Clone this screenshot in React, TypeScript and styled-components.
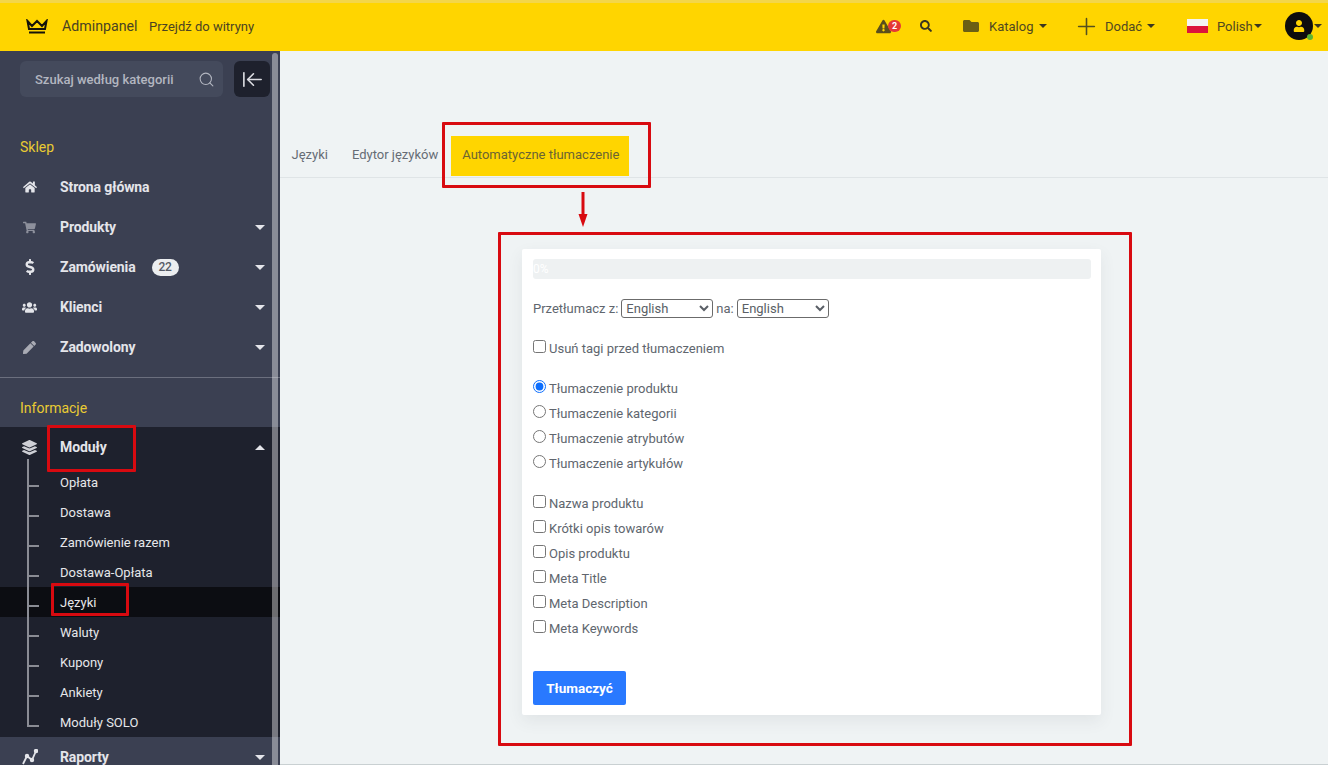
import React from 'react';
import styled, { createGlobalStyle } from 'styled-components';
import { FaHome, FaShoppingCart, FaDollarSign, FaUsers, FaPen, FaLayerGroup, FaFolder, FaSearch, FaUser, FaExclamationTriangle } from 'react-icons/fa';
import { ArrowLeftToLine, Plus, Search } from 'lucide-react';

const Global = createGlobalStyle`
  html, body { margin: 0; padding: 0; height: 100%; overflow: hidden; }
  body { font-family: Roboto, "Liberation Sans", sans-serif; background: #eff3f4; }
  * { box-sizing: border-box; }
`;

const Page = styled.div`
  position: relative;
  width: 1328px;
  height: 765px;
  overflow: hidden;
  display: flex;
  flex-direction: column;
`;
const Header = styled.header`
  flex: none;
  height: 51px;
  background: #ffd500;
  border-top: 3px solid #f3d64a;
  padding-bottom: 2px;
  display: flex;
  align-items: center;
  color: #4a4322;
  font-size: 14px;
`;
const Brand = styled.div`
  display: flex;
  align-items: center;
  padding-left: 26px;
  width: 149px;
  gap: 14px;
  font-size: 14.2px;
`;
const SiteLink = styled.span`
  font-size: 13px;
`;
const HeaderRight = styled.div`
  margin-left: auto;
  display: flex;
  align-items: center;
  height: 100%;
`;
const HeaderItem = styled.div<{ $w: number; $gap?: number }>`
  width: ${p => p.$w}px;
  display: flex;
  align-items: center;
  gap: ${p => p.$gap ?? 10}px;
  font-size: 13px;
  color: #4f4820;
  position: relative;
`;
const Caret = styled.span<{ $up?: boolean; $color?: string; $size?: number; $shift?: number }>`
  display: inline-block;
  width: 0;
  height: 0;
  margin-left: ${p => p.$shift ?? 0}px;
  border-left: ${p => p.$size ?? 4}px solid transparent;
  border-right: ${p => p.$size ?? 4}px solid transparent;
  ${p => `border-${p.$up ? 'bottom' : 'top'}: ${p.$size ?? 4}px solid ${p.$color ?? '#3a3620'};`}
`;
const AlertBadge = styled.span`
  position: absolute;
  left: 12px;
  top: 1px;
  width: 13px;
  height: 12px;
  border-radius: 6px;
  background: #e53935;
  color: #fff;
  font-size: 9px;
  font-weight: 700;
  line-height: 12px;
  text-align: center;
`;
const Avatar = styled.span`
  position: relative;
  width: 28px;
  height: 28px;
  border-radius: 50%;
  background: #0d0d0d;
  color: #ffd500;
  display: flex;
  align-items: center;
  justify-content: center;
`;
const OnlineDot = styled.span`
  position: absolute;
  right: 0;
  bottom: 0;
  width: 6px;
  height: 6px;
  border-radius: 50%;
  background: #5cb531;
`;
const Body = styled.div`
  flex: 1;
  display: flex;
  min-height: 0;
`;
const Sidebar = styled.aside`
  position: relative;
  flex: none;
  width: 280px;
  background: #3b4052;
  overflow: hidden;
`;
const Scrollbar = styled.div`
  position: absolute;
  right: 2px;
  top: 2px;
  bottom: 0;
  width: 6px;
  border-radius: 3px 3px 0 0;
  background: rgba(255, 255, 255, 0.4);
`;
const SearchRow = styled.div`
  display: flex;
  gap: 11px;
  padding: 10px 0 0 20px;
`;
const SearchBox = styled.div`
  width: 203px;
  height: 36px;
  border-radius: 6px;
  background: #444a5c;
  color: #b3b6c0;
  font-size: 13px;
  font-weight: 500;
  display: flex;
  align-items: center;
  justify-content: space-between;
  padding: 0 8px 0 15px;
`;
const CollapseBtn = styled.div`
  width: 36px;
  height: 36px;
  border-radius: 6px;
  background: #1e212d;
  color: #dcdde2;
  display: flex;
  align-items: center;
  justify-content: center;
`;
const SectionTitle = styled.div<{ $top: number; $bottom: number }>`
  color: #e9cb33;
  font-size: 14px;
  line-height: 20px;
  padding-left: 20px;
  margin: ${p => p.$top}px 0 ${p => p.$bottom}px;
`;
const Row = styled.div<{ $open?: boolean }>`
  height: 40px;
  display: flex;
  align-items: center;
  padding: 0 15px 0 0;
  background: ${p => (p.$open ? '#1e212d' : 'transparent')};
  color: #e4e5ea;
  font-size: 14px;
  font-weight: 700;
`;
const RowIcon = styled.span`
  width: 60px;
  display: flex;
  justify-content: center;
  padding-right: 0;
  color: #e4e5ea;
  flex: none;
  & > svg { margin-left: -1px; }
`;
const RowLabel = styled.span`
  flex: 1;
  display: flex;
  align-items: center;
  gap: 16px;
  letter-spacing: -0.1px;
`;
const Count = styled.span`
  width: 27px;
  height: 17px;
  border-radius: 9px;
  background: #eceef0;
  color: #555a66;
  font-size: 12px;
  font-weight: 500;
  line-height: 17px;
  text-align: center;
`;
const Divider = styled.div`
  height: 1px;
  background: #6b6f7e;
  margin-top: 10px;
`;
const SubMenu = styled.div`
  position: relative;
  background: #1e212d;
`;
const SubRow = styled.div<{ $active?: boolean }>`
  position: relative;
  height: 30px;
  display: flex;
  align-items: center;
  padding-left: 60px;
  color: #e6e7ea;
  font-size: 13px;
  background: ${p => (p.$active ? '#0c0d12' : 'transparent')};
  &::before {
    content: '';
    position: absolute;
    left: 28px;
    top: 18px;
    width: 11px;
    height: 2px;
    background: #8a8c94;
  }
`;
const TreeLine = styled.span`
  position: absolute;
  left: 27px;
  top: -8px;
  bottom: 10px;
  width: 2px;
  background: #8a8c94;
  z-index: 1;
`;
const Main = styled.main`
  flex: 1;
  min-width: 0;
  background: #eff3f4;
  border-bottom: 1px solid #c9d0d2;
  padding-top: 85px;
`;
const Tabs = styled.nav`
  height: 42px;
  border-bottom: 1px solid #dfe4e6;
  display: flex;
  align-items: flex-start;
  padding-left: 11.5px;
  font-size: 13px;
  color: #666c75;
`;
const Tab = styled.div<{ $active?: boolean }>`
  height: 40px;
  display: flex;
  align-items: center;
  padding: 0 ${p => (p.$active ? '10px' : '0')} 3px ${p => (p.$active ? '11px' : '0')};
  margin-right: ${p => (p.$active ? 0 : 24)}px;
  ${p => (p.$active ? 'background: #ffd500; color: #6b6433; margin-left: -11px;' : '')}
`;
const Card = styled.section`
  width: 579px;
  height: 466px;
  margin: 71px 0 0 242px;
  background: #fff;
  border-radius: 2px;
  box-shadow: 0 6px 16px rgba(60, 70, 80, 0.08);
  padding: 10px 10px 0 11px;
  color: #60666e;
  font-size: 13px;
`;
const Progress = styled.div`
  height: 20px;
  border-radius: 3px;
  background: #eef1f2;
  color: #fff;
  font-size: 12px;
  line-height: 20px;
`;
const LangRow = styled.div`
  display: flex;
  align-items: center;
  gap: 3px;
  height: 20px;
  margin-top: 19px;
  white-space: nowrap;
`;
const LangSelect = styled.select`
  width: 92px;
  height: 19px;
  font-family: Roboto, "Liberation Sans", sans-serif;
  font-size: 13px;
  color: #5a5f66;
  background: #fff;
  border: 1px solid #6b6b6b;
  border-radius: 3px;
  padding: 0;
`;
const OptionGroup = styled.div<{ $top: number }>`
  margin-top: ${p => p.$top}px;
  display: flex;
  flex-direction: column;
`;
const OptionRow = styled.label`
  height: 25px;
  display: flex;
  align-items: center;
  gap: 3px;
  & > input {
    width: 13px;
    height: 13px;
    margin: -4px 0 0 0;
    flex: none;
    accent-color: #0d6efd;
  }
`;
const TranslateBtn = styled.button`
  display: block;
  margin-top: 30px;
  width: 93px;
  height: 34px;
  border: 0;
  border-radius: 2px;
  background: #2979ff;
  color: #fff;
  font-family: Roboto, "Liberation Sans", sans-serif;
  font-size: 13.5px;
  font-weight: 700;
`;
const RedFrame = styled.div<{ $x: number; $y: number; $w: number; $h: number }>`
  position: absolute;
  left: ${p => p.$x}px;
  top: ${p => p.$y}px;
  width: ${p => p.$w}px;
  height: ${p => p.$h}px;
  border: 3px solid #d80a10;
  border-radius: 1px;
  pointer-events: none;
`;
const RedArrow = styled.svg`
  position: absolute;
  left: 578px;
  top: 192px;
`;

const Crown = () => (
  <svg width="22" height="15" viewBox="0 0 22 15" fill="none" stroke="#15130a" strokeWidth="2">
    <path d="M1.5 2 L6 7 L11 2 L16 7 L20.5 2 L19 10 H3 Z" strokeLinejoin="miter" />
    <path d="M3 13.5 H19" />
  </svg>
);
const ChartIcon = () => (
  <svg width="16" height="16" viewBox="0 0 16 16" fill="none" stroke="#e4e5ea" strokeWidth="1.8">
    <path d="M1 15 L5 7 L10 11 L14 2" />
    <circle cx="5" cy="7" r="1.3" fill="#e4e5ea" />
    <circle cx="10" cy="11" r="1.3" fill="#e4e5ea" />
    <circle cx="14" cy="2" r="1.3" fill="#e4e5ea" />
  </svg>
);
const Flag = () => (
  <svg width="21" height="14" viewBox="0 0 21 14">
    <rect width="21" height="7" fill="#f4f4f4" />
    <rect y="7" width="21" height="7" fill="#dc143c" />
  </svg>
);

const topMenu = [
  { icon: <FaShoppingCart size={13} color="#8d909c" />, label: 'Produkty' },
  { icon: <FaDollarSign size={16} />, label: 'Zamówienia', count: '22' },
  { icon: <FaUsers size={15} />, label: 'Klienci' },
  { icon: <FaPen size={13} color="#a9abb4" />, label: 'Zadowolony' },
];
const subMenu = ['Opłata', 'Dostawa', 'Zamówienie razem', 'Dostawa-Opłata', 'Języki', 'Waluty', 'Kupony', 'Ankiety', 'Moduły SOLO'];
const radios = ['Tłumaczenie produktu', 'Tłumaczenie kategorii', 'Tłumaczenie atrybutów', 'Tłumaczenie artykułów'];
const checks = ['Nazwa produktu', 'Krótki opis towarów', 'Opis produktu', 'Meta Title', 'Meta Description', 'Meta Keywords'];

export default function App() {
  return (
    <Page>
      <Global />
      <Header>
        <Brand>
          <Crown />
          <span>Adminpanel</span>
        </Brand>
        <SiteLink>Przejdź do witryny</SiteLink>
        <HeaderRight>
          <HeaderItem $w={44}>
            <FaExclamationTriangle size={15} color="#5a4f1c" />
            <AlertBadge>2</AlertBadge>
          </HeaderItem>
          <HeaderItem $w={43}>
            <FaSearch size={12} color="#3a3620" />
          </HeaderItem>
          <HeaderItem $w={115}>
            <FaFolder size={16} color="#6b5f14" />
            <span>Katalog</span>
            <Caret $shift={-4} />
          </HeaderItem>
          <HeaderItem $w={109} $gap={5}>
            <Plus size={27} color="#55501f" strokeWidth={1.4} style={{ marginLeft: -5 }} />
            <span>Dodać</span>
            <Caret />
          </HeaderItem>
          <HeaderItem $w={98} $gap={9}>
            <Flag />
            <span>Polish</span>
            <Caret $shift={-8} />
          </HeaderItem>
          <HeaderItem $w={43} $gap={1}>
            <Avatar>
              <FaUser size={12} />
              <OnlineDot />
            </Avatar>
            <Caret />
          </HeaderItem>
        </HeaderRight>
      </Header>
      <Body>
        <Sidebar>
          <SearchRow>
            <SearchBox>
              <span>Szukaj według kategorii</span>
              <Search size={17} strokeWidth={1.5} />
            </SearchBox>
            <CollapseBtn>
              <ArrowLeftToLine size={23} strokeWidth={1.7} />
            </CollapseBtn>
          </SearchRow>
          <SectionTitle $top={40} $bottom={10}>Sklep</SectionTitle>
          <Row>
            <RowIcon><FaHome size={14} /></RowIcon>
            <RowLabel>Strona główna</RowLabel>
          </Row>
          {topMenu.map(m => (
            <Row key={m.label}>
              <RowIcon>{m.icon}</RowIcon>
              <RowLabel>
                {m.label}
                {m.count && <Count>{m.count}</Count>}
              </RowLabel>
              <Caret $color="#e4e5ea" $size={5} />
            </Row>
          ))}
          <Divider />
          <SectionTitle $top={20} $bottom={9}>Informacje</SectionTitle>
          <Row $open>
            <RowIcon><FaLayerGroup size={15} color="#cfd0d6" /></RowIcon>
            <RowLabel>Moduły</RowLabel>
            <Caret $up $color="#e4e5ea" $size={5} />
          </Row>
          <SubMenu>
            <TreeLine />
            {subMenu.map(s => (
              <SubRow key={s} $active={s === 'Języki'}>{s}</SubRow>
            ))}
          </SubMenu>
          <Row>
            <RowIcon><ChartIcon /></RowIcon>
            <RowLabel>Raporty</RowLabel>
            <Caret $color="#e4e5ea" $size={5} />
          </Row>
          <Scrollbar />
        </Sidebar>
        <Main>
          <Tabs>
            <Tab>Języki</Tab>
            <Tab>Edytor języków</Tab>
            <Tab $active>Automatyczne tłumaczenie</Tab>
          </Tabs>
          <Card>
            <Progress>0%</Progress>
            <LangRow>
              <span>Przetłumacz z:</span>
              <LangSelect defaultValue="English"><option>English</option></LangSelect>
              <span>na:</span>
              <LangSelect defaultValue="English"><option>English</option></LangSelect>
            </LangRow>
            <OptionGroup $top={18}>
              <OptionRow><input type="checkbox" />Usuń tagi przed tłumaczeniem</OptionRow>
            </OptionGroup>
            <OptionGroup $top={15}>
              {radios.map((r, i) => (
                <OptionRow key={r}><input type="radio" name="kind" defaultChecked={i === 0} />{r}</OptionRow>
              ))}
            </OptionGroup>
            <OptionGroup $top={15}>
              {checks.map(c => (
                <OptionRow key={c}><input type="checkbox" />{c}</OptionRow>
              ))}
            </OptionGroup>
            <TranslateBtn>Tłumaczyć</TranslateBtn>
          </Card>
        </Main>
      </Body>
      <RedFrame $x={47} $y={425} $w={89} $h={47} />
      <RedFrame $x={51} $y={583} $w={78} $h={33} />
      <RedFrame $x={442} $y={122} $w={209} $h={66} />
      <RedFrame $x={498} $y={232} $w={634} $h={514} />
      <RedArrow width="10" height="36" viewBox="0 0 10 36">
        <path d="M5 0 V24" stroke="#d80a10" strokeWidth="3" />
        <path d="M0.5 22 H9.5 L5 35 Z" fill="#d80a10" />
      </RedArrow>
    </Page>
  );
}
